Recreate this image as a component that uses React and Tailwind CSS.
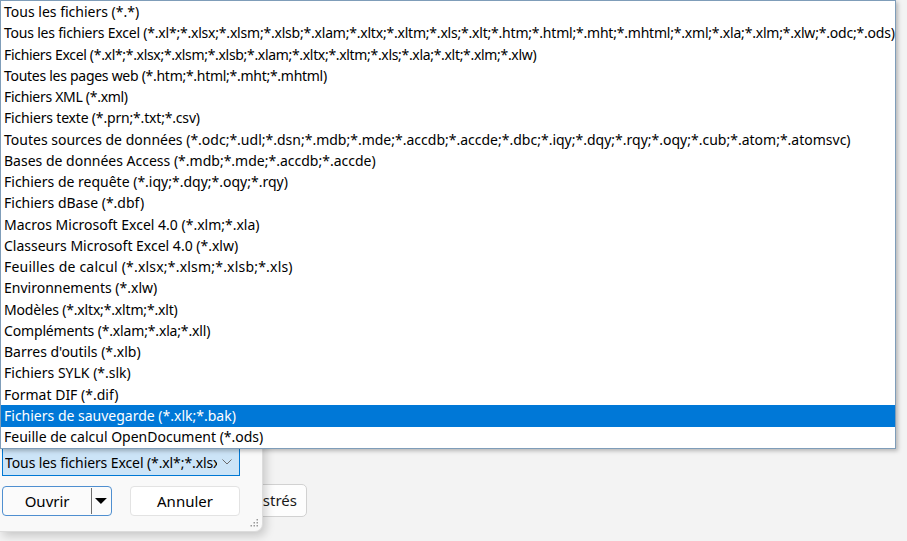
import React from "react";

const items = [
  ["Tous les fichiers (*.*)", ""],
  ["Tous les fichiers Excel (*.xl*;*.xlsx;*.xlsm;*.xlsb;*.xlam;*.xltx;*.xltm;*.xls;*.xlt;*.htm;*.html;*.mht;*.mhtml;*.xml;*.xla;*.xlm;*.xlw;*.odc;*.ods)", "tracking-[-0.21px]"],
  ["Fichiers Excel (*.xl*;*.xlsx;*.xlsm;*.xlsb;*.xlam;*.xltx;*.xltm;*.xls;*.xla;*.xlt;*.xlm;*.xlw)", "tracking-[-0.32px]"],
  ["Toutes les pages web (*.htm;*.html;*.mht;*.mhtml)", "tracking-[-0.28px]"],
  ["Fichiers XML (*.xml)", "tracking-[-0.3px]"],
  ["Fichiers texte (*.prn;*.txt;*.csv)", "tracking-[-0.18px]"],
  ["Toutes sources de données (*.odc;*.udl;*.dsn;*.mdb;*.mde;*.accdb;*.accde;*.dbc;*.iqy;*.dqy;*.rqy;*.oqy;*.cub;*.atom;*.atomsvc)", ""],
  ["Bases de données Access (*.mdb;*.mde;*.accdb;*.accde)", ""],
  ["Fichiers de requête (*.iqy;*.dqy;*.oqy;*.rqy)", ""],
  ["Fichiers dBase (*.dbf)", ""],
  ["Macros Microsoft Excel 4.0 (*.xlm;*.xla)", ""],
  ["Classeurs Microsoft Excel 4.0 (*.xlw)", ""],
  ["Feuilles de calcul (*.xlsx;*.xlsm;*.xlsb;*.xls)", "tracking-[0.2px]"],
  ["Environnements (*.xlw)", ""],
  ["Modèles (*.xltx;*.xltm;*.xlt)", "tracking-[-0.17px]"],
  ["Compléments (*.xlam;*.xla;*.xll)", "tracking-[-0.16px]"],
  ["Barres d'outils (*.xlb)", ""],
  ["Fichiers SYLK (*.slk)", ""],
  ["Format DIF (*.dif)", ""],
  ["Fichiers de sauvegarde (*.xlk;*.bak)", ""],
  ["Feuille de calcul OpenDocument (*.ods)", ""],
];

const font = { fontFamily: '"Noto Sans", "Open Sans", sans-serif' };

export default function App() {
  return (
    <div
      className="relative w-[907px] h-[541px] overflow-hidden bg-[#f3f3f3] text-black"
      style={font}
    >
      {/* background window button */}
      <div className="pt-[484px] pl-[170px]">
        <div className="w-[137px] h-[33px] rounded-[5px] border border-[#d1d1d1] bg-[#fdfdfd] flex items-center justify-end pr-[9px] text-[15px] text-[#1a1a1a]">
          Enregistrés
        </div>
      </div>

      {/* file dialog bottom part */}
      <div className="absolute left-0 top-[380px] w-[263px] h-[152px] bg-[#f9f9f9] rounded-br-[8px] border-r border-b border-[#dcdcdc] shadow-[3px_4px_10px_rgba(0,0,0,0.18)] flex flex-col">
        <div className="mt-[68px] ml-[2px] w-[238px] h-[28px] bg-[#cce4f7] border border-[#0078d4] flex items-center pl-[2px] pr-[6px] text-[14px] tracking-[-0.1px] whitespace-nowrap overflow-hidden">
          <span className="flex-1 overflow-hidden">Tous les fichiers Excel (*.xl*;*.xlsx</span>
          <svg width="12" height="8" viewBox="0 0 12 8" className="ml-[4px] shrink-0">
            <path d="M1.5 1.5 L6 6 L10.5 1.5" fill="none" stroke="#6b6b6b" strokeWidth="1" />
          </svg>
        </div>
        <div className="mt-[10px] ml-[2px] flex gap-[18px]">
          <div className="w-[110px] h-[30px] rounded-[4px] border border-[#4f8fd0] bg-[#fbfbfb] flex items-center">
            <span className="w-[89px] text-center text-[15px]">Ouvrir</span>
            <span className="w-px h-[26px] bg-[#6e6e6e]" />
            <svg width="18" height="10" viewBox="0 0 18 10" className="ml-[1px]">
              <path d="M2 2 L14 2 L8 8 Z" fill="#000" />
            </svg>
          </div>
          <div className="w-[110px] h-[30px] rounded-[4px] border border-[#e3e3e3] bg-white flex items-center justify-center text-[15px]">
            Annuler
          </div>
        </div>
        <div className="absolute right-[3px] bottom-[3px]">
          <svg width="10" height="10" viewBox="0 0 10 10">
            <g fill="#9a9a9a">
              <rect x="7.5" y="1" width="1.5" height="1.5" />
              <rect x="4.5" y="4" width="1.5" height="1.5" />
              <rect x="7.5" y="4" width="1.5" height="1.5" />
              <rect x="1.5" y="7" width="1.5" height="1.5" />
              <rect x="4.5" y="7" width="1.5" height="1.5" />
              <rect x="7.5" y="7" width="1.5" height="1.5" />
            </g>
          </svg>
        </div>
      </div>

      {/* dropdown list */}
      <div className="absolute left-0 top-0 w-[896px] h-[449px] bg-white border border-[#7f9db9] shadow-[2px_2px_4px_rgba(0,0,0,0.25)] pt-[0.5px] flex flex-col">
        {items.map(([t, tr], i) => (
          <div
            key={i}
            className={
              "h-[21.25px] shrink-0 flex items-center pl-[3px] whitespace-nowrap text-[14px] leading-none " +
              tr +
              (i === 19 ? " bg-[#0078d7] text-white" : "")
            }
          >
            {t}
          </div>
        ))}
      </div>
    </div>
  );
}
